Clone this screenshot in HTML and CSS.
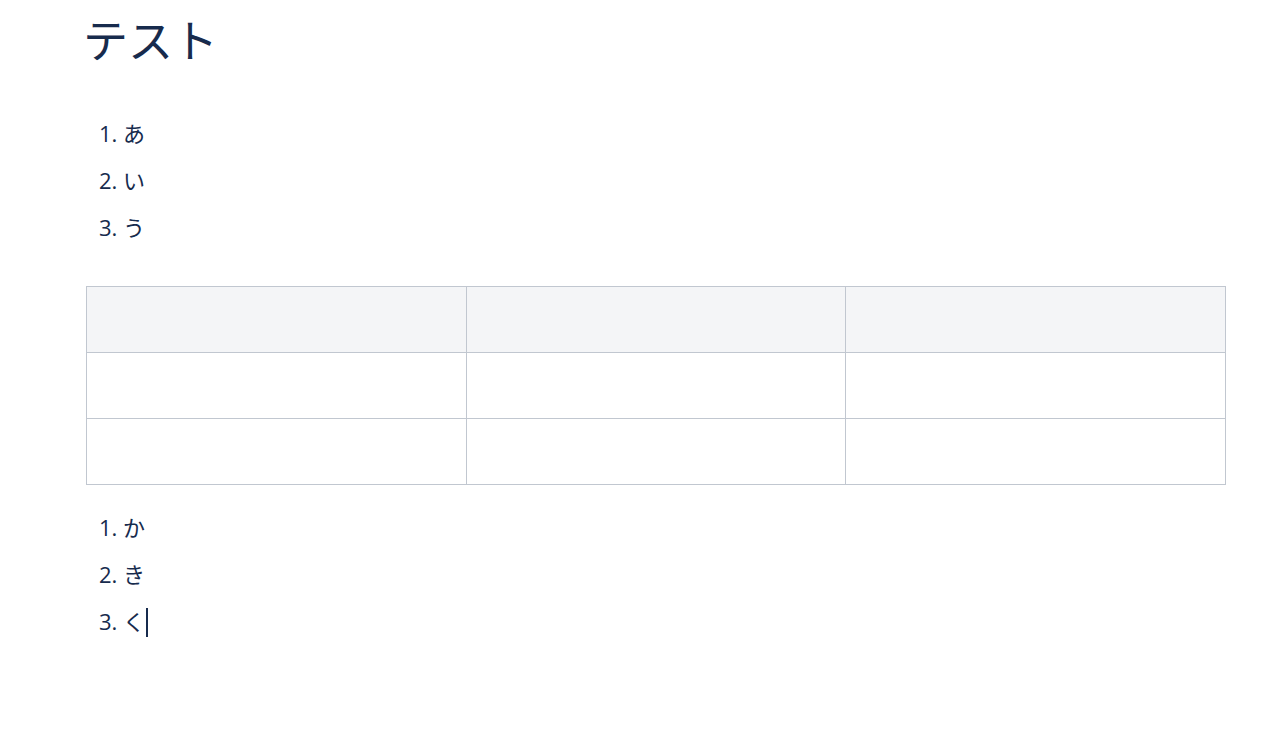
FILE: index.html
```html
<!DOCTYPE html>
<html lang="ja">
<head>
<meta charset="utf-8">
<link rel="stylesheet" href="styles.css">
</head>
<body>
<div class="page">
  <h1 class="title">テスト</h1>
  <ol class="list">
    <li>あ</li>
    <li>い</li>
    <li>う</li>
  </ol>
  <table class="grid">
    <tr class="head"><td></td><td></td><td></td></tr>
    <tr><td></td><td></td><td></td></tr>
    <tr><td></td><td></td><td></td></tr>
  </table>
  <ol class="list list-after">
    <li>か</li>
    <li>き</li>
    <li>く<span class="caret"></span></li>
  </ol>
</div>
</body>
</html>
```
FILE: styles.css
```css
html, body {
  margin: 0;
  padding: 0;
  background: #ffffff;
}
body {
  font-family: "Open Sans", "Noto Sans CJK JP", sans-serif;
  color: #172b4d;
}
.page {
  padding: 0 56px 0 86px;
  width: 1140px;
}
.title {
  font-family: "Noto Sans CJK JP", sans-serif;
  font-weight: 400;
  font-size: 45px;
  line-height: 56px;
  margin: 11px 0 0 -3px;
  color: #172b4d;
}
.list {
  margin: 50px 0 0 0;
  padding-left: 37px;
  font-size: 22px;
}
.list li {
  line-height: 33px;
  margin-bottom: 14px;
  font-family: "Open Sans", "Noto Sans CJK JP", sans-serif;
}
.list li:last-child {
  margin-bottom: 0;
}
.grid {
  margin-top: 42px;
  width: 1140px;
  border-collapse: collapse;
  table-layout: fixed;
}
.grid td {
  border: 1px solid #c1c7d0;
  height: 65px;
  padding: 0;
}
.grid .head td {
  background: #f4f5f7;
}
.list-after {
  margin-top: 26px;
}
.caret {
  display: inline-block;
  width: 2px;
  height: 29px;
  background: #172b4d;
  vertical-align: -7px;
  margin-left: 1px;
}
```
